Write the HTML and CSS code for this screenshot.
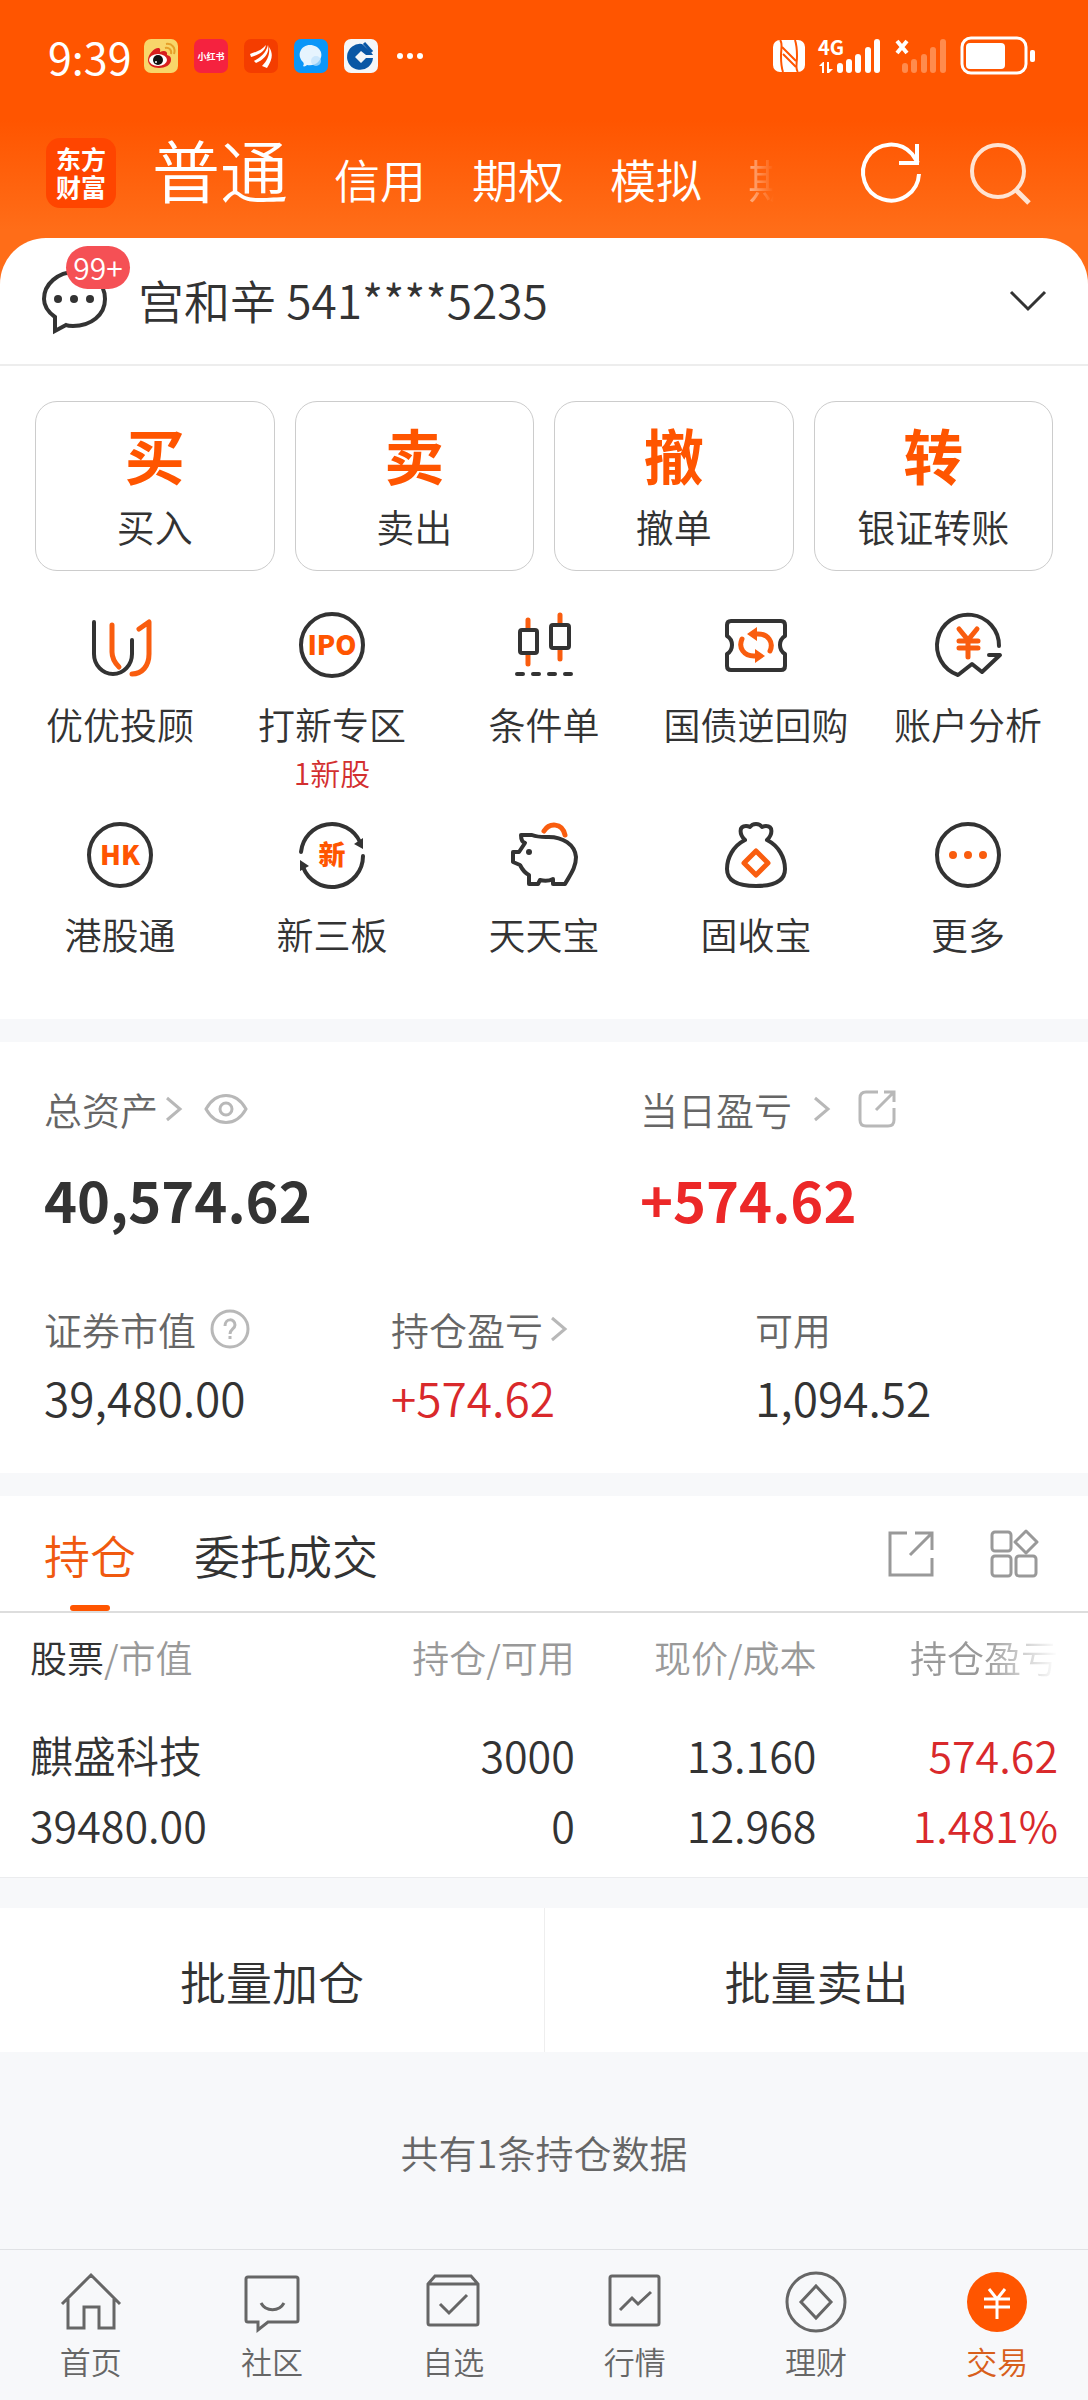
FILE: index.html
```html
<!DOCTYPE html>
<html lang="zh-CN">

<head>
    <meta charset="UTF-8">
    <meta name="viewport" content="width=device-width, initial-scale=1.0">
    <title>东方财富 - 交易</title>
    <link rel="stylesheet" href="styles.css">
</head>

<body>
    <header class="top">
        <!-- 状态栏 -->
        <div class="status-bar">
            <span class="time">9:39</span>
            <div class="apps">
                <svg width="34" height="34" viewBox="0 0 34 34">
                    <rect width="34" height="34" rx="7" fill="#f8d66a" />
                    <path d="M4 21C4 15 11 8 15 9c2 1 1 3 1 4 4-2 8-1 7 3 4 1 4 3 4 5 0 5-6 8-12 8S4 26 4 21z" fill="#d81e1e" />
                    <ellipse cx="14" cy="21" rx="9" ry="6" fill="#fff" />
                    <circle cx="14" cy="21" r="5" fill="#111" />
                    <circle cx="12" cy="23" r="1" fill="#fff" />
                    <path d="M21 9c4-1 7 2 6 6M22 5c6-1 10 4 8 10" fill="none" stroke="#e5a02a" stroke-width="2" />
                </svg>
                <svg width="34" height="34" viewBox="0 0 34 34">
                    <rect width="34" height="34" rx="7" fill="#f5223f" />
                    <text x="17" y="21" class="xhs">小红书</text>
                </svg>
                <svg width="34" height="34" viewBox="0 0 34 34">
                    <rect width="34" height="34" rx="7" fill="#f43d00" />
                    <path d="M6 15C12 13 18 11 22 6c-1 7-8 10-15 12zM10 22C17 18 22 14 24 6c2 8-4 15-12 18zM18 27c6-6 8-12 7-19 4 6 4 12-2 21z" fill="#fff" />
                </svg>
                <svg width="34" height="34" viewBox="0 0 34 34">
                    <rect width="34" height="34" rx="7" fill="#0b96f8" />
                    <path d="M9 27c1-1 1-3 0-4C2 16 7 6 16 6s15 9 9 16c-3 4-8 5-12 4-1 1-3 2-4 1z" fill="#e6f4fe" />
                    <circle cx="22" cy="22" r="5" fill="#bfe1fb" opacity=".7" />
                </svg>
                <svg width="34" height="34" viewBox="0 0 34 34">
                    <rect width="34" height="34" rx="7" fill="#f5f7f9" />
                    <path d="M18 5a13 13 0 1 0 11 14h-7l-5 5-6-6 6-6 5 4h7C28 14 23 9 18 5z" fill="#0a57a5" />
                    <path d="M20 4l8 9" stroke="#0a57a5" stroke-width="3" />
                </svg>
                <svg width="26" height="34" viewBox="0 0 26 34" fill="#fff">
                    <circle cx="3" cy="17" r="3" />
                    <circle cx="13" cy="17" r="3" />
                    <circle cx="23" cy="17" r="3" />
                </svg>
            </div>
            <div class="signals">
                <svg width="32" height="34" viewBox="0 0 32 34">
                    <rect y="1" width="32" height="32" rx="7" fill="#fff" />
                    <path d="M7 1c3 3 1 8 1 16s1 13 2 16M25 33c-3-3-1-8-1-16s-1-13-2-16" fill="none" stroke="#ff5500" stroke-width="2" />
                    <path d="M9 8l14 14M10 15l13 13" stroke="#ff5500" stroke-width="2" />
                </svg>
                <svg width="64" height="34" viewBox="0 0 64 34" fill="#fff">
                    <text x="0" y="16" class="net">4G</text>
                    <path d="M1 27l4-4h1v11H4v-7zM9 23h2v7h4l-4 4H9z" />
                    <rect x="19" y="24" width="6" height="10" rx="3" />
                    <rect x="28" y="20" width="6" height="14" rx="3" />
                    <rect x="37" y="15" width="6" height="19" rx="3" />
                    <rect x="47" y="8" width="6" height="26" rx="3" />
                    <rect x="56" y="0" width="6" height="34" rx="3" />
                </svg>
                <svg width="52" height="34" viewBox="0 0 52 34" fill="#ff8b4d">
                    <path d="M2 2l10 12M12 2L2 14" stroke="#fff" stroke-width="4" />
                    <rect x="7" y="24" width="6" height="10" rx="3" />
                    <rect x="16" y="20" width="6" height="14" rx="3" />
                    <rect x="26" y="15" width="6" height="19" rx="3" />
                    <rect x="35" y="8" width="6" height="26" rx="3" />
                    <rect x="45" y="0" width="6" height="34" rx="3" />
                </svg>
                <svg width="76" height="40" viewBox="0 0 76 40" fill="#fff">
                    <rect x="2" y="2" width="64" height="35" rx="9" fill="none" stroke="#fff" stroke-width="3" />
                    <rect x="6" y="7" width="39" height="26" rx="4" />
                    <rect x="70" y="14" width="5" height="12" rx="2" />
                </svg>
            </div>
        </div>

        <!-- 账户类型导航 -->
        <div class="title-bar">
            <div class="logo">东方<br>财富</div>
            <nav class="account-tabs">
                <a href="#" class="active">普通</a>
                <a href="#">信用</a>
                <a href="#">期权</a>
                <a href="#">模拟</a>
                <a href="#" class="faded">期</a>
            </nav>
            <button class="icon-button" aria-label="刷新">
                <svg width="62" height="62" viewBox="0 0 62 62" fill="none" stroke="#fff" stroke-width="4">
                    <path d="M59 32A28 28 0 1 1 52 12L58 21" />
                    <path d="M57 2V21H39" />
                </svg>
            </button>
            <button class="icon-button" aria-label="搜索">
                <svg width="62" height="62" viewBox="0 0 62 62" fill="none" stroke="#ffe3d2" stroke-width="4">
                    <circle cx="28" cy="29" r="26" />
                    <path d="M46 48L59 61" stroke-width="5" />
                </svg>
            </button>
        </div>
    </header>

    <main>
        <section class="panel account">
            <button class="account-row">
                <span class="message">
                    <svg width="66" height="66" viewBox="0 0 66 66">
                        <path d="M13 63V49C6 44 2 38 2 31 2 16 16 4 33 4s30 11 30 27-14 27-32 27c-3 0-5 0-7-1z" fill="none" stroke="#333" stroke-width="4" />
                        <circle cx="16" cy="31" r="4" fill="#333" />
                        <circle cx="32" cy="31" r="4" fill="#333" />
                        <circle cx="48" cy="31" r="4" fill="#333" />
                    </svg>
                    <span class="badge">99+</span>
                </span>
                <span class="account-name">宫和辛 541****5235</span>
                <svg width="36" height="22" viewBox="0 0 36 22" fill="none" stroke="#333" stroke-width="3">
                    <path d="M1 2l17 17L35 2" />
                </svg>
            </button>

            <!-- 主要操作 -->
            <div class="actions">
                <button><b>买</b><span>买入</span></button>
                <button><b>卖</b><span>卖出</span></button>
                <button><b>撤</b><span>撤单</span></button>
                <button><b>转</b><span>银证转账</span></button>
            </div>

            <!-- 功能入口 -->
            <div class="features">
                <a href="#">
                    <svg class="icon" viewBox="0 0 66 66">
                        <path d="M7 10V42a19 20 0 0 0 38 0V28" />
                        <path class="hot" d="M25 13V40c0 7 3 11 7 15M52 17l10-7V42c0 12-7 20-17 20" />
                    </svg>
                    <span>优优投顾</span>
                </a>
                <a href="#">
                    <svg class="icon" viewBox="0 0 66 66">
                        <circle cx="33" cy="33" r="31" />
                        <text x="33" y="43">IPO</text>
                    </svg>
                    <span>打新专区</span>
                    <small>1新股</small>
                </a>
                <a href="#">
                    <svg class="icon" viewBox="0 0 66 66">
                        <path class="hot" d="M17 8V17M17 43V52M49 3V12M49 38V47" />
                        <rect x="9" y="18" width="17" height="23" rx="2" />
                        <rect x="40" y="13" width="18" height="23" rx="2" />
                        <path d="M6 62h6M22 62h6M38 62h6M54 62h6" />
                    </svg>
                    <span>条件单</span>
                </a>
                <a href="#">
                    <svg class="icon" viewBox="0 0 66 66">
                        <path d="M8 9H58q4 0 4 4V24q-5 3-5 9t5 9V54q0 4-4 4H8q-4 0-4-4V42q5-3 5-9t-5-9V13q0-4 4-4z" />
                        <path class="hot" d="M47 39c4-9-2-17-12-17H31M19 27c-4 9 2 17 12 17H35" />
                        <path class="hot-fill" d="M24 22l10-7v14zM42 44l-10-7v14z" />
                    </svg>
                    <span>国债逆回购</span>
                </a>
                <a href="#">
                    <svg class="icon" viewBox="0 0 66 66">
                        <path d="M64 34A31 31 0 1 0 23 63L37 52l10 8L65 43H54" />
                        <path class="hot" d="M24 17l9 11 9-11M33 28V45M24 29H43M24 36H43" />
                    </svg>
                    <span>账户分析</span>
                </a>
                <a href="#">
                    <svg class="icon" viewBox="0 0 66 66">
                        <circle cx="33" cy="33" r="31" />
                        <text x="33" y="43">HK</text>
                    </svg>
                    <span>港股通</span>
                </a>
                <a href="#">
                    <svg class="icon" viewBox="0 0 66 66">
                        <path d="M2 30A31 31 0 0 1 61 20M64 34A31 31 0 0 1 4 45" />
                        <path class="dark-fill" d="M64 16V27l-9-5zM1 49V38l9 6z" />
                        <text x="33" y="43">新</text>
                    </svg>
                    <span>新三板</span>
                </a>
                <a href="#">
                    <svg class="icon" viewBox="0 0 66 66">
                        <path d="M14 21C11 20 10 17 10 13h11c5 2 8 2 14 2 17-1 29 8 30 20 0 11-6 18-11 27H42V57c-4 2-9 2-13 1l-2 4H18V53c-4-2-7-6-9-10l-7-3V30h6z" />
                        <circle class="dark-fill" cx="18" cy="30" r="3" />
                        <path class="hot" d="M33 9c5-8 18-9 21 4" />
                    </svg>
                    <span>天天宝</span>
                </a>
                <a href="#">
                    <svg class="icon" viewBox="0 0 66 66">
                        <path d="M22 18C16 12 16 4 23 4q2 0 4 1 2-3 6-3t6 3q2-1 4-1c7 0 7 8 1 14 12 6 18 18 18 29 0 13-13 17-29 17S4 60 4 47C4 36 10 24 22 18z" />
                        <path class="hot" d="M33 29L45 41 33 53 21 41z" />
                    </svg>
                    <span>固收宝</span>
                </a>
                <a href="#">
                    <svg class="icon" viewBox="0 0 66 66">
                        <circle cx="33" cy="33" r="31" />
                        <path class="hot-fill" d="M14 33a4 4 0 1 1 8 0 4 4 0 1 1-8 0M29 33a4 4 0 1 1 8 0 4 4 0 1 1-8 0M44 33a4 4 0 1 1 8 0 4 4 0 1 1-8 0" />
                    </svg>
                    <span>更多</span>
                </a>
            </div>
        </section>

        <!-- 资产概览 -->
        <section class="panel assets">
            <div class="summary">
                <div>
                    <div class="label">总资产
                        <svg width="16" height="26" viewBox="0 0 16 26"><path d="M1 2l13 11L1 24" /></svg>
                        <svg class="eye" width="44" height="32" viewBox="0 0 44 32">
                            <path d="M2 16C12-2 32-2 42 16 32 34 12 34 2 16z" />
                            <circle cx="22" cy="16" r="6" />
                        </svg>
                    </div>
                    <div class="total">40,574.62</div>
                </div>
                <div>
                    <div class="label">当日盈亏
                        <svg class="far" width="16" height="26" viewBox="0 0 16 26"><path d="M1 2l13 11L1 24" /></svg>
                        <svg class="share" width="38" height="38" viewBox="0 0 38 38">
                            <path d="M20 2H8Q2 2 2 8V30q0 6 6 6H30q6 0 6-6V18M26 2H36V12M36 2L18 20" />
                        </svg>
                    </div>
                    <div class="total up">+574.62</div>
                </div>
            </div>
            <div class="details">
                <div>
                    <div class="label">证券市值
                        <svg class="help" width="40" height="40" viewBox="0 0 40 40">
                            <circle cx="20" cy="20" r="18" />
                            <path d="M15 17c0-8 10-8 10-1 0 4-5 4-5 9M20 27v3" />
                        </svg>
                    </div>
                    <div class="value">39,480.00</div>
                </div>
                <div>
                    <div class="label">持仓盈亏
                        <svg width="16" height="26" viewBox="0 0 16 26"><path d="M1 2l13 11L1 24" /></svg>
                    </div>
                    <div class="value up">+574.62</div>
                </div>
                <div>
                    <div class="label">可用</div>
                    <div class="value">1,094.52</div>
                </div>
            </div>
        </section>

        <!-- 持仓列表 -->
        <section class="panel holdings">
            <div class="list-tabs">
                <button class="active">持仓</button>
                <button>委托成交</button>
                <div class="tools">
                    <svg width="48" height="48" viewBox="0 0 48 48">
                        <path d="M20 3H3V45H45V28M28 3H45V20M45 3L23 25" />
                    </svg>
                    <svg width="48" height="48" viewBox="0 0 48 48">
                        <rect x="2" y="2" width="19" height="19" rx="3" />
                        <rect x="2" y="26" width="19" height="20" rx="3" />
                        <rect x="26" y="26" width="20" height="20" rx="3" />
                        <path d="M36 1L47 12 36 23 25 12z" stroke-linejoin="round" />
                    </svg>
                </div>
            </div>
            <table>
                <thead>
                    <tr>
                        <th><em>股票</em>/市值</th>
                        <th>持仓/可用</th>
                        <th>现价/成本</th>
                        <th><span class="fade-out">持仓盈亏</span></th>
                    </tr>
                </thead>
                <tbody>
                    <tr>
                        <td>麒盛科技<br>39480.00</td>
                        <td>3000<br>0</td>
                        <td>13.160<br>12.968</td>
                        <td class="up">574.62<br>1.481%</td>
                    </tr>
                </tbody>
            </table>
        </section>

        <div class="batch">
            <button>批量加仓</button>
            <button>批量卖出</button>
        </div>
        <p class="count">共有1条持仓数据</p>
    </main>

    <!-- 底部导航 -->
    <nav class="bottom-nav">
        <a href="#">
            <svg viewBox="0 0 64 64"><path d="M3 34L32 5 61 34M9 29V58H25V37H40V58H55V29" /></svg>
            首页
        </a>
        <a href="#">
            <svg viewBox="0 0 64 64"><path d="M8 7H56q2 0 2 2V50q0 2-2 2H28L18 60V52H8q-2 0-2-2V9q0-2 2-2zM21 33c5 9 18 9 23 0" /></svg>
            社区
        </a>
        <a href="#">
            <svg viewBox="0 0 64 64"><path d="M7 14L14 6H50L57 14V53q0 2-2 2H9q-2 0-2-2zH57M19 34l9 9L46 25" /></svg>
            自选
        </a>
        <a href="#">
            <svg viewBox="0 0 64 64"><rect x="7" y="6" width="49" height="49" rx="2" /><path d="M17 40L29 28 35 34 48 22" /></svg>
            行情
        </a>
        <a href="#">
            <svg viewBox="0 0 64 64"><circle cx="32" cy="32" r="29" /><path d="M32 16L47 32 32 48 17 32z" /></svg>
            理财
        </a>
        <a href="#" class="active">
            <svg viewBox="0 0 64 64"><circle cx="32" cy="32" r="30" /><path d="M24 19L32 29 40 19M32 29V49M19 29H45M19 37H45" /></svg>
            交易
        </a>
    </nav>
</body>

</html>
```
FILE: styles.css
```css
* {
    box-sizing: border-box;
}

body {
    margin: 0;
    min-height: 100vh;
    display: flex;
    flex-direction: column;
    background-color: #f7f8fa;
    color: #333;
    font-family: "Noto Sans CJK SC", sans-serif;
    font-weight: 350;
}

button {
    padding: 0;
    border: none;
    background: none;
    color: inherit;
    font: inherit;
    cursor: pointer;
}

a {
    color: inherit;
    text-decoration: none;
}

svg {
    flex: none;
    overflow: visible;
}

.up {
    color: #d9292b;
}

/* 顶部橙色区域 */
.top {
    height: 288px;
    padding-top: 32px;
    background: linear-gradient(#ff5500 120px, #ff6d18 230px);
    color: #fff;
}

.status-bar {
    display: flex;
    align-items: center;
    height: 48px;
    padding: 0 52px 0 48px;
}

.time {
    width: 96px;
    font-size: 43px;
    line-height: 48px;
    font-weight: 400;
}

.apps {
    display: flex;
    gap: 16px;
}

.apps svg:last-child {
    margin-left: 3px;
}

.signals {
    display: flex;
    align-items: center;
    gap: 13px;
    margin-left: auto;
}

.xhs {
    fill: #fff;
    font-size: 9px;
    font-weight: 700;
    text-anchor: middle;
}

.net {
    font-size: 20px;
    font-weight: 700;
}

.title-bar {
    display: flex;
    align-items: center;
    gap: 48px;
    height: 126px;
    margin-top: 28px;
    padding: 4px 56px 0 46px;
}

.logo {
    width: 70px;
    height: 70px;
    padding-top: 6px;
    border-radius: 14px;
    background-color: #ff4500;
    font-size: 25px;
    line-height: 28px;
    font-weight: 700;
    text-align: center;
}

.account-tabs {
    flex: 1;
    display: flex;
    align-items: baseline;
    gap: 46px;
    margin-left: -12px;
    font-size: 46px;
    line-height: 80px;
    white-space: nowrap;
}

.account-tabs .active {
    font-size: 68px;
}

.account-tabs .faded {
    mask-image: linear-gradient(to right, rgba(0, 0, 0, .5), transparent 26px);
}

.icon-button {
    height: 62px;
}

/* 白色卡片 */
.panel {
    background-color: #fff;
}

.account {
    margin-top: -50px;
    padding-bottom: 57px;
    border-radius: 46px 46px 0 0;
}

.account-row {
    display: flex;
    align-items: center;
    width: 100%;
    height: 128px;
    padding: 0 42px;
    border-bottom: 2px solid #ededed;
    text-align: left;
}

.message {
    position: relative;
    height: 66px;
}

.badge {
    position: absolute;
    top: -22px;
    left: 24px;
    width: 64px;
    border-radius: 22px;
    background-color: #f55055;
    color: #fff;
    font-size: 30px;
    line-height: 43px;
    text-align: center;
}

.account-name {
    flex: 1;
    margin-left: 30px;
    padding-bottom: 4px;
    font-size: 46px;
    line-height: 60px;
}

.actions {
    display: grid;
    grid-template-columns: repeat(4, 1fr);
    gap: 20px;
    padding: 35px 35px 0;
}

.actions button {
    display: flex;
    flex-direction: column;
    align-items: center;
    gap: 8px;
    height: 170px;
    padding-top: 16px;
    border: 1px solid #ccc;
    border-radius: 22px;
    font-size: 38px;
    line-height: 56px;
}

.actions b {
    color: #ff5500;
    font-size: 60px;
    line-height: 72px;
    font-weight: 700;
}

.features {
    display: grid;
    grid-template-columns: repeat(5, 1fr);
    grid-template-rows: 210px auto;
    padding: 41px 14px 0;
}

.features a {
    display: flex;
    flex-direction: column;
    align-items: center;
    font-size: 37px;
    line-height: 56px;
    white-space: nowrap;
}

.features small {
    color: #d32f2f;
    font-size: 30px;
    line-height: 40px;
}

.icon {
    width: 66px;
    height: 66px;
    margin-bottom: 18px;
    fill: none;
    stroke: #333;
    stroke-width: 4;
    stroke-linecap: round;
    stroke-linejoin: round;
}

.icon .hot {
    stroke: #f95d0f;
    stroke-width: 5;
}

.icon .hot-fill {
    fill: #f95d0f;
    stroke: none;
}

.icon .dark-fill {
    fill: #333;
    stroke: none;
}

.icon text {
    fill: #ff5500;
    stroke: none;
    font-size: 27px;
    font-weight: 900;
    text-anchor: middle;
}

/* 资产概览 */
.assets {
    margin-top: 23px;
    padding: 39px 44px 44px;
}

.assets svg {
    fill: none;
    stroke: #b8b8b8;
    stroke-width: 3;
}

.summary {
    display: grid;
    grid-template-columns: 596fr 404fr;
}

.details {
    display: grid;
    grid-template-columns: 347fr 364fr 289fr;
    margin-top: 66px;
}

.label {
    display: flex;
    align-items: center;
    gap: 8px;
    color: #666;
    font-size: 38px;
    line-height: 56px;
}

.label .eye,
.label .far {
    margin-left: 14px;
}

.label .share {
    margin-left: 20px;
}

.label .help {
    margin-left: 6px;
}

.total {
    margin-top: 26px;
    font-size: 56px;
    line-height: 72px;
    font-weight: 700;
}

.total.up {
    color: #ec2828;
}

.value {
    margin-top: 8px;
    font-size: 46px;
    line-height: 64px;
}

/* 持仓列表 */
.holdings {
    margin-top: 23px;
    border-bottom: 1px solid #ebecee;
}

.list-tabs {
    display: flex;
    gap: 58px;
    height: 117px;
    padding: 0 50px 0 44px;
    border-bottom: 2px solid #ddd;
    font-size: 46px;
}

.list-tabs button {
    position: relative;
}

.list-tabs .active {
    color: #f0590f;
}

.list-tabs .active::after {
    content: "";
    position: absolute;
    bottom: 0;
    left: calc(50% - 20px);
    width: 40px;
    height: 6px;
    border-radius: 3px;
    background-color: #ff5500;
}

.tools {
    display: flex;
    align-items: center;
    gap: 55px;
    margin-left: auto;
    fill: none;
    stroke: #999;
    stroke-width: 3;
}

table {
    width: 100%;
    padding: 0 30px;
    border-spacing: 0;
    table-layout: fixed;
}

th,
td {
    padding: 0;
    text-align: right;
    white-space: nowrap;
}

th:nth-child(-n+2) {
    width: 26.5%;
}

th:first-child,
td:first-child {
    text-align: left;
}

th {
    color: #999;
    font-size: 37px;
    line-height: 88px;
    font-weight: inherit;
}

th em {
    color: #333;
    font-style: normal;
}

.fade-out {
    mask-image: linear-gradient(to right, #000 50%, transparent);
}

td {
    padding: 18px 0;
    font-size: 43px;
    line-height: 70px;
}

.batch {
    display: grid;
    grid-template-columns: 1fr 1fr;
    margin-top: 30px;
    background-color: #fff;
}

.batch button {
    height: 144px;
    font-size: 46px;
}

.batch button + button {
    border-left: 1px solid #eee;
}

.count {
    margin: 72px 0 48px;
    color: #666;
    font-size: 38px;
    line-height: 56px;
    text-align: center;
}

/* 底部导航 */
.bottom-nav {
    display: grid;
    grid-template-columns: repeat(6, 1fr);
    height: 151px;
    margin-top: auto;
    padding-top: 20px;
    border-top: 1px solid #e0e2e5;
    color: #666;
    font-size: 31px;
    line-height: 48px;
}

.bottom-nav a {
    display: flex;
    flex-direction: column;
    align-items: center;
    gap: 3px;
}

.bottom-nav svg {
    width: 64px;
    height: 64px;
    fill: none;
    stroke: #666;
    stroke-width: 3;
}

.bottom-nav .active {
    color: #d85f1c;
}

.bottom-nav .active svg {
    stroke: #fff;
}

.bottom-nav .active circle {
    fill: #ff5500;
    stroke: none;
}
```
